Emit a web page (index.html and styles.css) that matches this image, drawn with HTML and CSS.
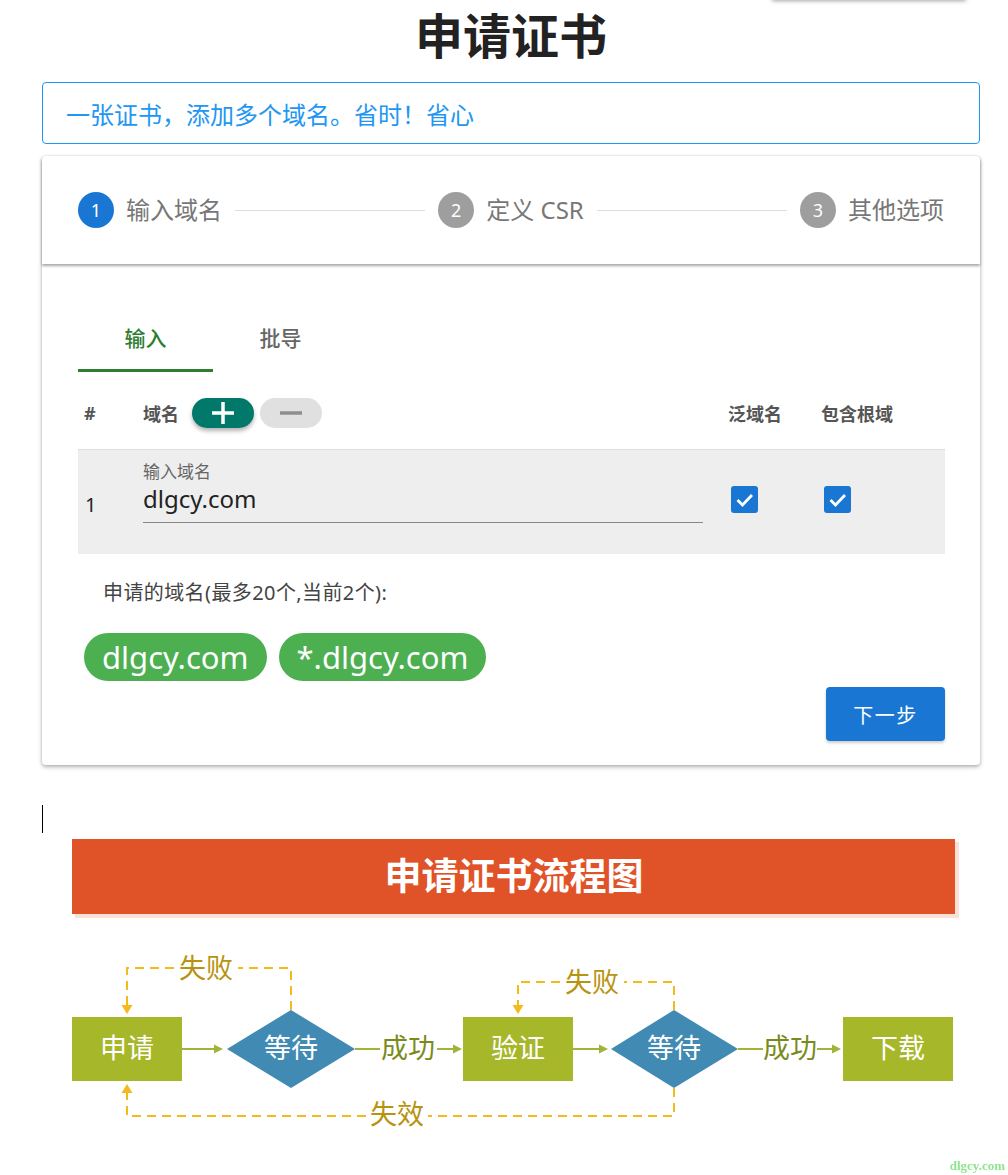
FILE: index.html
```html
<!DOCTYPE html>
<html lang="zh-CN">
<head>
    <meta charset="UTF-8">
    <meta name="viewport" content="width=device-width, initial-scale=1.0">
    <title>申请证书</title>
    <link rel="stylesheet" href="styles.css">
</head>
<body>
    <div class="menu-shadow"></div>
    <div class="page">
        <h1 class="title">申请证书</h1>
        <div class="alert">一张证书，添加多个域名。省时！省心</div>

        <div class="stepper">
            <div class="stepper-header">
                <div class="step active"><span class="step-num">1</span><span class="step-label">输入域名</span></div>
                <div class="step-line"></div>
                <div class="step"><span class="step-num">2</span><span class="step-label">定义 CSR</span></div>
                <div class="step-line"></div>
                <div class="step"><span class="step-num">3</span><span class="step-label">其他选项</span></div>
            </div>

            <div class="stepper-content">
                <div class="tabs">
                    <div class="tab active">输入</div>
                    <div class="tab">批导</div>
                </div>

                <div class="table-head">
                    <div class="cell-num">#</div>
                    <div class="cell-domain">
                        <span class="head-text">域名</span>
                        <button class="btn-add">
                            <svg width="22" height="22" viewBox="0 0 22 22"><rect x="9.25" y="0" width="3.5" height="22" fill="#fff"/><rect x="0" y="9.25" width="22" height="3.5" fill="#fff"/></svg>
                        </button>
                        <button class="btn-remove">
                            <svg width="22" height="22" viewBox="0 0 22 22"><rect x="0" y="9.25" width="22" height="3.5" fill="#8e8e8e"/></svg>
                        </button>
                    </div>
                    <div>泛域名</div>
                    <div>包含根域</div>
                </div>

                <div class="table-row">
                    <div class="cell-num">1</div>
                    <div class="field">
                        <span class="field-label">输入域名</span>
                        <div class="field-value">dlgcy.com</div>
                    </div>
                    <div class="cell-check">
                        <span class="checkbox"><svg width="27" height="27" viewBox="0 0 27 27"><polyline points="6.5,14 11.5,19 21,9" fill="none" stroke="#fff" stroke-width="2.8"/></svg></span>
                    </div>
                    <div class="cell-check">
                        <span class="checkbox"><svg width="27" height="27" viewBox="0 0 27 27"><polyline points="6.5,14 11.5,19 21,9" fill="none" stroke="#fff" stroke-width="2.8"/></svg></span>
                    </div>
                </div>

                <p class="summary">申请的域名(最多20个,当前2个):</p>
                <div class="chips">
                    <span class="chip">dlgcy.com</span>
                    <span class="chip">*.dlgcy.com</span>
                </div>
                <div class="actions">
                    <button class="btn-next">下一步</button>
                </div>
            </div>
        </div>

        <div class="caret"></div>

        <!-- 流程图 -->
        <svg class="flowchart" viewBox="60 835 900 300" width="900" height="300">
            <rect x="75" y="842" width="884" height="76" fill="#f9e0d8"/>
            <rect x="72" y="839" width="883" height="75" fill="#e05328"/>
            <text class="fc-title" x="514" y="874">申请证书流程图</text>

            <g class="fc-dash">
                <path d="M291 1010V968H238M174 968H127V1006"/>
                <path d="M674 1010V982H624M560 982H518V1006"/>
                <path d="M674 1088V1116H428M366 1116H127V1093"/>
            </g>
            <g class="fc-dash-head">
                <path d="M121.5 1005h11l-5.5 9z"/>
                <path d="M512.5 1005h11l-5.5 9z"/>
                <path d="M121.5 1093h11l-5.5 -9z"/>
            </g>

            <g class="fc-line">
                <path d="M182 1049H216M355 1049H380M437 1049H455M573 1049H601M738 1049H763M817 1049H834"/>
            </g>
            <g class="fc-head">
                <path d="M214 1044.5l9 4.5-9 4.5z"/>
                <path d="M453 1044.5l9 4.5-9 4.5z"/>
                <path d="M599 1044.5l9 4.5-9 4.5z"/>
                <path d="M832 1044.5l9 4.5-9 4.5z"/>
            </g>

            <rect class="fc-box" x="72" y="1017" width="110" height="64"/>
            <rect class="fc-box" x="463" y="1017" width="110" height="64"/>
            <rect class="fc-box" x="843" y="1017" width="110" height="64"/>
            <polygon class="fc-diamond" points="227,1049 291,1010 355,1049 291,1088"/>
            <polygon class="fc-diamond" points="611,1049 674,1010 738,1049 674,1088"/>

            <text class="fc-white" x="127" y="1046">申请</text>
            <text class="fc-white" x="291" y="1046">等待</text>
            <text class="fc-white" x="518" y="1046">验证</text>
            <text class="fc-white" x="674" y="1046">等待</text>
            <text class="fc-white" x="898" y="1046">下载</text>
            <text class="fc-ok" x="408" y="1046">成功</text>
            <text class="fc-ok" x="790" y="1046">成功</text>
            <text class="fc-fail" x="206" y="966">失败</text>
            <text class="fc-fail" x="592" y="980">失败</text>
            <text class="fc-fail" x="397" y="1112">失效</text>
        </svg>
    </div>

    <div class="watermark">dlgcy.com</div>
</body>
</html>
```

FILE: styles.css
```css
body {
    margin: 0;
    font-family: "Noto Sans", "Noto Sans CJK SC", sans-serif;
    color: #222;
    background: #fff;
}
.page {
    width: 938px;
    margin-left: 42px;
}
.menu-shadow {
    position: absolute;
    top: -30px;
    left: 772px;
    width: 194px;
    height: 30px;
    background: #fff;
    box-shadow: 0 1px 4px rgba(0, 0, 0, 0.35);
}
.title {
    margin: 8px 0 18px;
    font-size: 48px;
    line-height: 56px;
    font-weight: bold;
    text-align: center;
    color: #222;
}
.alert {
    height: 60px;
    padding: 0 23px;
    border: 1px solid #2196f3;
    border-radius: 4px;
    display: flex;
    align-items: center;
    color: #2196f3;
    font-size: 24px;
}
.stepper {
    margin-top: 12px;
    background: #fff;
    border-radius: 4px;
    box-shadow: 0 2px 4px rgba(0, 0, 0, 0.3), 0 0 3px rgba(0, 0, 0, 0.08);
}
.stepper-header {
    position: relative;
    height: 108px;
    padding: 0 36px;
    display: flex;
    align-items: center;
    border-radius: 4px 4px 0 0;
    box-shadow: 0 2px 3px rgba(0, 0, 0, 0.35);
}
.step {
    display: flex;
    align-items: center;
    gap: 12px;
}
.step-num {
    width: 36px;
    height: 36px;
    border-radius: 50%;
    background: #9e9e9e;
    color: #fff;
    font-size: 18px;
    display: flex;
    align-items: center;
    justify-content: center;
}
.step.active .step-num {
    background: #1976d2;
}
.step-label {
    font-size: 24px;
    line-height: 32px;
    color: #777;
}
.step-line {
    flex: 1;
    height: 1px;
    margin: 0 13px;
    background: #ddd;
}
.stepper-content {
    padding: 38px 35px 24px 36px;
}
.tabs {
    display: flex;
    height: 70px;
}
.tab {
    width: 135px;
    display: flex;
    align-items: center;
    justify-content: center;
    font-size: 21px;
    font-weight: 500;
    color: #666;
}
.tab.active {
    color: #2e7d32;
    box-shadow: inset 0 -3px 0 #2e7d32;
}
.table-head,
.table-row {
    display: grid;
    grid-template-columns: 65px 585px 93px 1fr;
}
.table-head {
    height: 72px;
    padding-top: 5px;
    align-items: center;
    font-size: 18px;
    font-weight: bold;
    color: #555;
}
.cell-num {
    padding-left: 6px;
}
.cell-domain {
    display: flex;
    align-items: center;
    gap: 6px;
}
.head-text {
    margin-right: 7px;
}
.btn-add,
.btn-remove {
    width: 62px;
    height: 30px;
    padding: 0;
    border: none;
    border-radius: 15px;
    display: flex;
    align-items: center;
    justify-content: center;
    cursor: pointer;
}
.btn-add {
    background: #00796b;
    box-shadow: 0 3px 4px rgba(0, 0, 0, 0.3);
}
.btn-remove {
    background: #e0e0e0;
}
.table-row {
    height: 104px;
    border-top: 1px solid #ddd;
    background: #eee;
}
.table-row .cell-num {
    align-self: center;
    padding: 4px 0 0 7px;
    font-size: 20px;
}
.field {
    width: 560px;
    align-self: start;
    padding-top: 11px;
}
.field-label {
    display: block;
    font-size: 17px;
    line-height: 22px;
    color: #666;
}
.field-value {
    font-size: 24px;
    line-height: 32px;
    padding-bottom: 7px;
    border-bottom: 1px solid #888;
    color: #222;
}
.cell-check {
    align-self: start;
    padding: 36px 0 0 3px;
}
.checkbox {
    display: block;
    width: 27px;
    height: 27px;
    border-radius: 3px;
    background: #1976d2;
}
.checkbox svg {
    display: block;
}
.summary {
    margin: 25px 0 0 25px;
    font-size: 20px;
    line-height: 28px;
    letter-spacing: 0.4px;
    color: #444;
}
.chips {
    display: flex;
    gap: 12px;
    margin-top: 26px;
    padding-left: 6px;
}
.chip {
    height: 48px;
    padding: 0 18px;
    border-radius: 24px;
    background: #4caf50;
    color: #fff;
    font-size: 31px;
    line-height: 48px;
}
.actions {
    display: flex;
    justify-content: flex-end;
    margin-top: 6px;
}
.btn-next {
    width: 119px;
    height: 54px;
    border: none;
    border-radius: 4px;
    background: #1976d2;
    color: #fff;
    font-family: inherit;
    font-size: 20px;
    letter-spacing: 1.5px;
    box-shadow: 0 2px 3px rgba(0, 0, 0, 0.2);
    cursor: pointer;
}
.caret {
    width: 1px;
    height: 28px;
    margin-top: 40px;
    background: #000;
}
.flowchart {
    display: block;
    margin: 2px 0 0 18px;
}
.flowchart text {
    font-family: "Noto Sans CJK SC", sans-serif;
    text-anchor: middle;
    dominant-baseline: central;
}
.fc-title {
    font-size: 37px;
    font-weight: bold;
    fill: #fff;
}
.fc-dash path {
    fill: none;
    stroke: #f4b91c;
    stroke-width: 2;
    stroke-dasharray: 9 6;
}
.fc-dash-head path {
    fill: #f4b91c;
}
.fc-line path {
    fill: none;
    stroke: #a0b43a;
    stroke-width: 2;
}
.fc-head path {
    fill: #a0b43a;
}
.fc-box {
    fill: #a7b72a;
}
.fc-diamond {
    fill: #418ab3;
}
.fc-white {
    font-size: 27px;
    fill: #fff;
}
.fc-ok {
    font-size: 27px;
    fill: #7b8a1c;
}
.fc-fail {
    font-size: 27px;
    fill: #b8930f;
}
.watermark {
    position: fixed;
    right: 3px;
    bottom: 1px;
    font-family: "Liberation Serif", serif;
    font-weight: bold;
    font-size: 13px;
    color: #8fe58f;
}
```
